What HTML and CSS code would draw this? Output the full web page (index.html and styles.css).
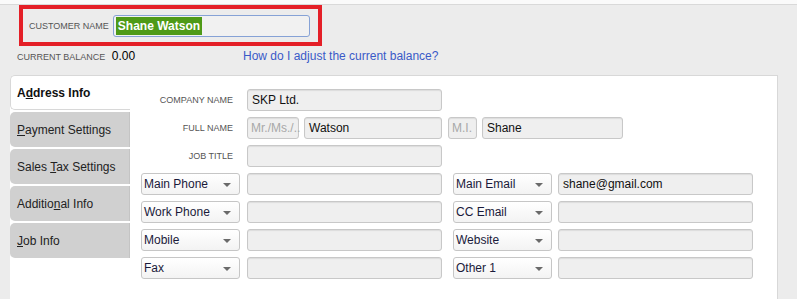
FILE: index.html
```html
<!DOCTYPE html>
<html lang="en">
<head>
    <meta charset="UTF-8">
    <title>Customer</title>
    <link rel="stylesheet" href="styles.css">
</head>
<body>
    <div class="top-strip"></div>

    <!-- Customer name -->
    <div class="customer-box">
        <span class="caps-label">Customer Name</span>
        <div class="name-field"><span class="selected">Shane Watson</span></div>
    </div>

    <div class="balance-row">
        <span class="balance">
            <span class="caps-label">Current Balance</span>
            <span class="amount">0.00</span>
        </span>
        <a class="help-link" href="#">How do I adjust the current balance?</a>
    </div>

    <div class="main">
        <!-- Tabs -->
        <div class="tabs">
            <div class="tab active"><span>A<u>d</u>dress Info</span></div>
            <div class="tab"><span><u>P</u>ayment Settings</span></div>
            <div class="tab"><span>Sales <u>T</u>ax Settings</span></div>
            <div class="tab"><span>Additio<u>n</u>al Info</span></div>
            <div class="tab"><span><u>J</u>ob Info</span></div>
        </div>

        <!-- Address form -->
        <div class="panel">
            <div class="form-row">
                <span class="row-label caps-label">Company Name</span>
                <div class="field w-main">SKP Ltd.</div>
            </div>
            <div class="form-row">
                <span class="row-label caps-label">Full Name</span>
                <div class="field w-title placeholder">Mr./Ms./..</div>
                <div class="field w-last">Watson</div>
                <div class="field w-mi placeholder">M.I.</div>
                <div class="field w-first">Shane</div>
            </div>
            <div class="form-row">
                <span class="row-label caps-label">Job Title</span>
                <div class="field w-main"></div>
            </div>
            <div class="form-row">
                <div class="dropdown">Main Phone</div>
                <div class="field w-main"></div>
                <div class="dropdown second">Main Email</div>
                <div class="field w-main">shane@gmail.com</div>
            </div>
            <div class="form-row">
                <div class="dropdown">Work Phone</div>
                <div class="field w-main"></div>
                <div class="dropdown second">CC Email</div>
                <div class="field w-main"></div>
            </div>
            <div class="form-row">
                <div class="dropdown">Mobile</div>
                <div class="field w-main"></div>
                <div class="dropdown second">Website</div>
                <div class="field w-main"></div>
            </div>
            <div class="form-row">
                <div class="dropdown">Fax</div>
                <div class="field w-main"></div>
                <div class="dropdown second">Other 1</div>
                <div class="field w-main"></div>
            </div>
        </div>
    </div>
</body>
</html>
```

FILE: styles.css
```css
body {
    margin: 0;
    background-color: #ececec;
    font-family: "Liberation Sans", Arial, sans-serif;
    font-size: 12px;
    color: #111;
    overflow: hidden;
}

.top-strip {
    height: 4px;
    background-color: #fafafa;
    border-bottom: 1px solid #d9d9d9;
}

.caps-label {
    font-size: 9px;
    text-transform: uppercase;
    color: #555;
    white-space: nowrap;
}

/* Customer name box */
.customer-box {
    display: flex;
    align-items: center;
    gap: 4px;
    width: 289px;
    height: 33px;
    margin-left: 19px;
    padding-left: 6px;
    border: 4px solid #e41f27;
    box-sizing: content-box;
}

.name-field {
    width: 191px;
    height: 20px;
    padding: 0 2px;
    display: flex;
    align-items: center;
    border: 1px solid #86a2d6;
    border-radius: 3px;
    background-color: #f1f1f1;
}

.selected {
    background-color: #4e9a17;
    color: #fff;
    font-weight: bold;
    font-size: 12px;
    line-height: 18px;
    padding: 0 2px;
}

.balance-row {
    display: flex;
    align-items: baseline;
    margin-top: 3px;
    padding-left: 17px;
    height: 14px;
}

.balance {
    width: 226px;
}

.amount {
    margin-left: 3px;
    font-size: 12px;
    color: #000;
}

.help-link {
    color: #3a5ac8;
    text-decoration: none;
}

/* Tabs + panel */
.main {
    display: flex;
    margin-top: 12px;
    padding-left: 10px;
    padding-right: 19px;
    height: 224px;
}

.tabs {
    width: 120px;
    background-color: #fff;
    border-top-left-radius: 5px;
}

.tab {
    height: 35px;
    margin-bottom: 2px;
    padding-left: 7px;
    display: flex;
    align-items: center;
    box-sizing: border-box;
    background-color: #d0d0d0;
    border-right: 1px solid #c4c4c4;
    border-radius: 5px 0 0 5px;
    color: #222;
    white-space: nowrap;
}

.tab.active {
    background-color: #fff;
    border: 1px solid #d8d8d8;
    border-right: none;
    padding-left: 6px;
    font-weight: bold;
    color: #111;
}

.panel {
    flex: 1;
    background-color: #fff;
    border-top: 1px solid #d8d8d8;
    border-right: 1px solid #d8d8d8;
    padding: 13px 0 0 11px;
}

.form-row {
    display: flex;
    align-items: center;
    height: 22px;
    margin-bottom: 6px;
}

.row-label {
    width: 99px;
    padding-right: 7px;
    box-sizing: border-box;
    text-align: right;
    margin-right: 7px;
}

.field {
    height: 22px;
    box-sizing: border-box;
    padding-left: 4px;
    display: flex;
    align-items: center;
    background-color: #efefef;
    border: 1px solid #c8c8c8;
    border-radius: 3px;
    box-shadow: inset 0 1px 1px rgba(0, 0, 0, 0.08);
    color: #111;
}

.field.placeholder {
    color: #a8a8a8;
    padding-left: 3px;
}

.w-main { width: 195px; }
.w-title { width: 52px; margin-right: 5px; }
.w-last { width: 138px; margin-right: 6px; }
.w-mi { width: 29px; margin-right: 5px; }
.w-first { width: 141px; }

.dropdown {
    position: relative;
    width: 99px;
    height: 22px;
    box-sizing: border-box;
    margin-right: 7px;
    padding-left: 2px;
    display: flex;
    align-items: center;
    background: linear-gradient(#ffffff, #f3f3f3);
    border: 1px solid #c6c6c6;
    border-radius: 3px;
    color: #1a1a3a;
}

.dropdown::after {
    content: "";
    position: absolute;
    right: 8px;
    top: 9px;
    border-left: 4px solid transparent;
    border-right: 4px solid transparent;
    border-top: 4px solid #6a6a6a;
}

.dropdown.second {
    margin-left: 11px;
    margin-right: 6px;
}
```
